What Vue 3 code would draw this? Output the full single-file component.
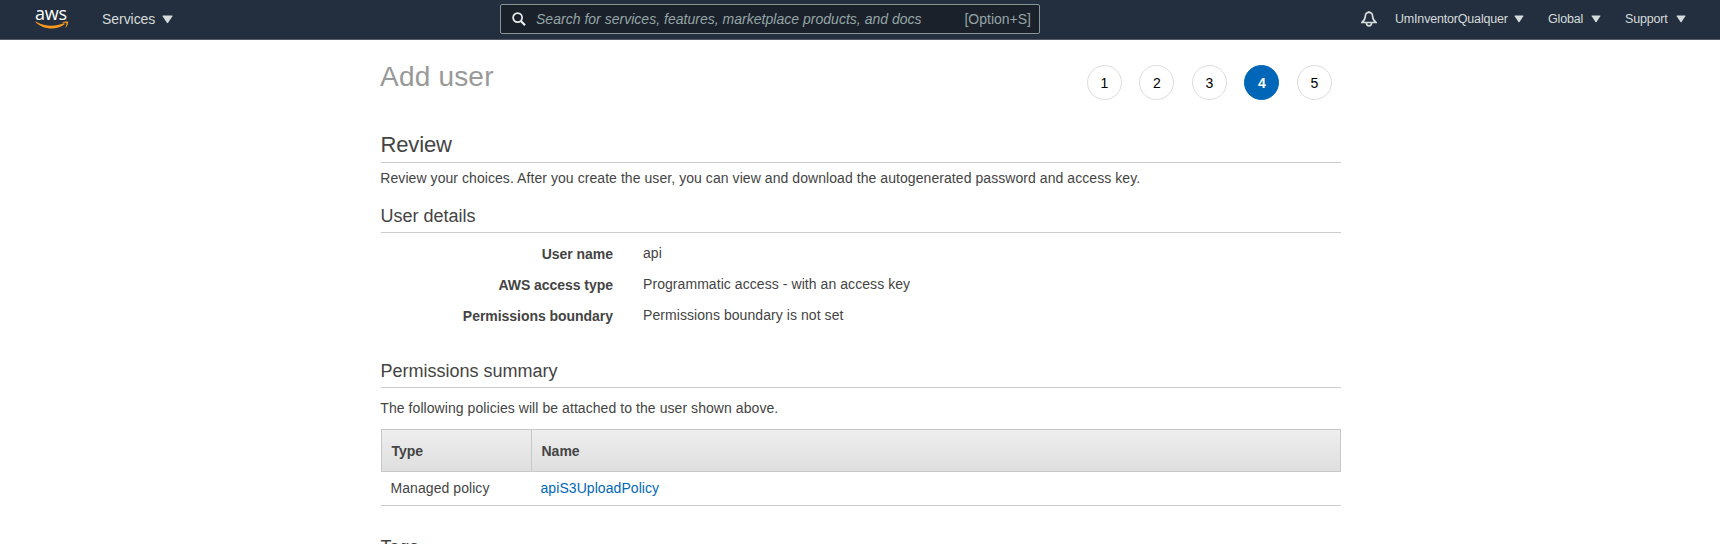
<script setup>
const menus = [
  { id: 'account', label: 'UmInventorQualquer' },
  { id: 'region', label: 'Global' },
  { id: 'support', label: 'Support' }
]
const steps = [1, 2, 3, 4, 5]
const currentStep = 4
const details = [
  { id: 'name', label: 'User name', value: 'api' },
  { id: 'access', label: 'AWS access type', value: 'Programmatic access - with an access key' },
  { id: 'boundary', label: 'Permissions boundary', value: 'Permissions boundary is not set' }
]
const policies = [{ type: 'Managed policy', name: 'apiS3UploadPolicy' }]
</script>

<template>
  <div class="page">
    <header class="nav">
      <div class="logo">
        <span class="logo-text">aws</span>
        <svg class="smile" viewBox="0 0 34 9" width="34" height="9">
          <path d="M.6 1.2C.2 1 .5.4 1.1.7 9.5 5.5 20 5.900 28.800 2.200c.9-.3 1.400.6.600 1.200C21.500 9.300 8.500 8.900.6 1.200Z" fill="#f79a1e" />
          <path d="M27.500 1.300C29 .3 32.600.1 33 .8c.5.800-.4 4.200-2.100 5.700-.3.200-.6.100-.4-.3.400-1.100 1.300-3.400.9-3.900-.5-.6-2.800-.4-3.700-.4-.4 0-.5-.3-.2-.6Z" fill="#f79a1e" />
        </svg>
      </div>
      <div class="services">
        <span>Services</span>
        <svg viewBox="0 0 11 9" width="11" height="9"><path d="M1 .5h9q.8 0 .3.900L6.100 7.800q-.6.900-1.200 0L.7 1.400Q.2.500 1 .5Z" /></svg>
      </div>
      <div class="search">
        <svg class="lens" viewBox="0 0 14 14" width="14" height="14" fill="none">
          <circle cx="5.600" cy="5.600" r="4.500" stroke-width="1.700" />
          <path d="M8.900 8.900 13 13.200" stroke-width="2.200" />
        </svg>
        <span class="placeholder">Search for services, features, marketplace products, and docs</span>
        <span class="shortcut">[Option+S]</span>
      </div>
      <svg class="bell" viewBox="0 0 16 16" width="16" height="16" fill="none">
        <path d="M7.900 1.300C5.600 1.300 4.400 3 4.300 5.200 4.200 8.200 3 9.800.9 11.500H15c-2.100-1.700-3.300-3.300-3.400-6.300-.1-2.200-1.400-3.900-3.700-3.900Z" />
        <path d="M5.400 12c.1 1.900 1.100 2.900 2.600 2.900s2.500-1 2.600-2.900" />
        <path d="M7.900.2v1" />
      </svg>
      <div v-for="m in menus" :key="m.id" class="menu" :class="m.id">
        <span>{{ m.label }}</span>
        <svg viewBox="0 0 11 9" width="10" height="8"><path d="M1 .5h9q.8 0 .3.900L6.100 7.800q-.6.900-1.200 0L.7 1.400Q.2.500 1 .5Z" /></svg>
      </div>
    </header>

    <main class="content">
      <div class="top">
        <h1>Add user</h1>
        <ol class="steps">
          <li v-for="s in steps" :key="s" :class="{ active: s === currentStep }">{{ s }}</li>
        </ol>
      </div>

      <h2>Review</h2>
      <p class="intro">Review your choices. After you create the user, you can view and download the autogenerated password and access key.</p>

      <h3>User details</h3>
      <dl class="details">
        <div v-for="d in details" :key="d.id" class="detail">
          <dt>{{ d.label }}</dt>
          <dd>{{ d.value }}</dd>
        </div>
      </dl>

      <h3>Permissions summary</h3>
      <p class="note">The following policies will be attached to the user shown above.</p>
      <div class="table">
        <div class="row head">
          <div class="cell">Type</div>
          <div class="cell">Name</div>
        </div>
        <div v-for="p in policies" :key="p.name" class="row body">
          <div class="cell">{{ p.type }}</div>
          <div class="cell"><a>{{ p.name }}</a></div>
        </div>
      </div>

      <h3>Tags</h3>
    </main>
  </div>
</template>

<style>
html,
body {
  background: #fff;
  overflow: hidden;
}
</style>

<style scoped>
.page {
  width: 1720px;
  height: 544px;
  overflow: hidden;
  background: #fff;
  color: #444;
  font: 14px/20px "Liberation Sans", Arial, sans-serif;
}
.page * {
  box-sizing: border-box;
}
.nav {
  display: flex;
  height: 40px;
  padding-left: 35px;
  background: #232f3e;
  border-bottom: 1px solid #545b68;
  color: #d5dbdb;
  white-space: nowrap;
}
.nav svg {
  flex: none;
  fill: #d5dbdb;
}
.logo {
  width: 67px;
  padding-top: 5px;
}
.logo-text {
  display: block;
  height: 16px;
  color: #fff;
  font: 18px/17px "Open Sans", "Noto Sans", sans-serif;
  font-weight: 500;
  letter-spacing: -0.2px;
}
.logo .smile {
  display: block;
  fill: none;
}
.services {
  display: flex;
  width: 398px;
  height: 20px;
  margin-top: 9px;
  align-items: center;
}
.services span {
  width: 60px;
  letter-spacing: -0.05px;
}
.search {
  display: flex;
  width: 540px;
  height: 30px;
  flex: none;
  margin-top: 4px;
  padding: 0 8px 0 11px;
  align-items: center;
  background: #1a212b;
  border: 1px solid #879596;
  border-radius: 2px;
  color: #95a5a6;
}
.nav .lens {
  margin-right: 10px;
  fill: none;
  stroke: #eaeded;
}
.placeholder {
  flex: 1;
  font-style: italic;
  letter-spacing: 0.02px;
}
.nav .bell {
  margin: 11px 18px 0 321px;
  fill: none;
  stroke: #d5dbdb;
  stroke-width: 1.7;
}
.menu {
  display: flex;
  height: 20px;
  margin-top: 9px;
  align-items: center;
  justify-content: space-between;
  font-size: 12.5px;
  letter-spacing: -0.18px;
}
.account {
  width: 129px;
}
.region {
  width: 53px;
  margin-left: 24px;
}
.support {
  width: 61px;
  margin-left: 24px;
}
.content {
  width: 960px;
  margin-left: 381px;
  padding-top: 16px;
}
.top {
  display: flex;
  height: 73px;
  justify-content: space-between;
}
h1,
h2,
h3,
p,
dl,
dd,
ol {
  margin: 0;
  padding: 0;
  font-weight: 400;
}
h1 {
  color: #999;
  font-size: 28px;
  line-height: 42px;
  letter-spacing: 0.2px;
  text-indent: -1px;
}
.steps {
  display: flex;
  gap: 17.5px;
  margin: 9px 9.2px 0 0;
  list-style: none;
}
.steps li {
  width: 35px;
  height: 35px;
  border: 1px solid #ddd;
  border-radius: 50%;
  color: #000;
  line-height: 34px;
  text-align: center;
}
.steps .active {
  background: #0067b8;
  border-color: #0067b8;
  color: #fff;
  font-weight: 700;
}
h2 {
  height: 34px;
  border-bottom: 1px solid #ccc;
  font-size: 22px;
  line-height: 32px;
  letter-spacing: -0.15px;
  text-indent: -0.5px;
}
.intro {
  margin: 5px 0 16px;
}
p,
dd,
.body {
  letter-spacing: 0.065px;
}
p {
  text-indent: -0.7px;
}
h3 {
  height: 29px;
  border-bottom: 1px solid #ccc;
  font-size: 18px;
  line-height: 24px;
  text-indent: -0.5px;
}
.details {
  height: 126px;
  padding-top: 10px;
}
.detail {
  display: flex;
  height: 31px;
  gap: 30px;
}
dt {
  width: 232px;
  padding-top: 1px;
  font-weight: 700;
  letter-spacing: -0.04px;
  text-align: right;
}
.note {
  margin: 10px 0 11px;
}
.table {
  margin-bottom: 29px;
}
.row {
  display: grid;
  grid-template-columns: 150px 1fr;
}
.head {
  height: 43px;
  border: 1px solid #c8c8c8;
  border-left: 0;
  background: linear-gradient(#eee, #dfdfdf);
  box-shadow: inset 1px 0 #c8c8c8;
  font-weight: 700;
}
.head .cell {
  padding: 11px 10.5px;
}
.head .cell + .cell {
  padding-left: 9.500px;
  border-left: 1px solid #c8c8c8;
}
.body {
  height: 34px;
  border-bottom: 1px solid #ccc;
}
.body .cell {
  padding: 6px 9.500px;
}
a {
  color: #0067b8;
}
</style>
